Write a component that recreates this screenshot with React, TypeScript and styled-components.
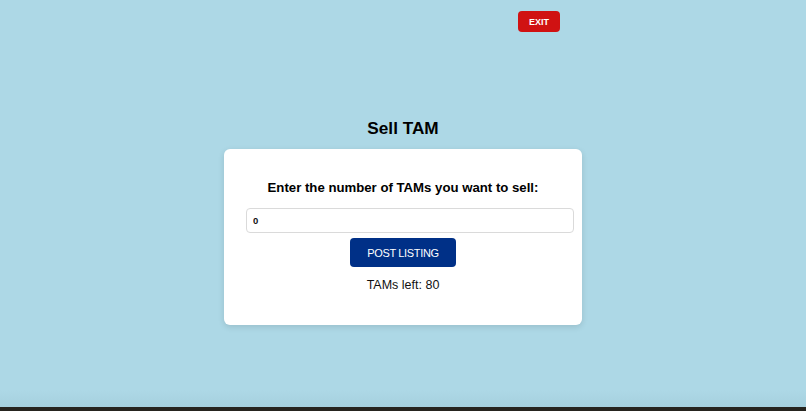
import styled, { createGlobalStyle } from "styled-components";

const GlobalStyle = createGlobalStyle`
  html, body {
    margin: 0;
    padding: 0;
    background: #add8e6;
    font-family: "Liberation Sans", Arial, sans-serif;
  }
`;

export default function App() {
  return (
    <Page>
      <GlobalStyle />
      <TopBar>
        <ExitButton type="button">EXIT</ExitButton>
      </TopBar>
      <Main>
        <Title>Sell TAM</Title>
        <Card>
          <Label htmlFor="tam-amount">Enter the number of TAMs you want to sell:</Label>
          <AmountInput id="tam-amount" type="number" defaultValue={0} />
          <PostButton type="button">POST LISTING</PostButton>
          <Remaining>TAMs left: 80</Remaining>
        </Card>
      </Main>
      <BottomEdge />
    </Page>
  );
}

const Page = styled.div`
  min-height: 100vh;
  display: flex;
  flex-direction: column;
  background: linear-gradient(to bottom, #add8e6 0%, #add8e6 95%, #a4cedc 100%);
`;

const TopBar = styled.div`
  display: flex;
  justify-content: flex-end;
  padding: 11px 246px 0 0;
`;

const ExitButton = styled.button`
  width: 42px;
  height: 21px;
  border: none;
  border-radius: 4px;
  background: #d01212;
  color: #fff;
  font-family: "Liberation Sans", Arial, sans-serif;
  font-size: 9px;
  font-weight: bold;
  padding: 0;
  cursor: pointer;
`;

const Main = styled.main`
  flex: 1;
  display: flex;
  flex-direction: column;
  align-items: center;
  padding-top: 86px;
`;

const Title = styled.h1`
  margin: 0 0 11px;
  font-size: 17.2px;
  line-height: 20px;
  font-weight: bold;
  color: #000;
`;

const Card = styled.div`
  width: 358px;
  box-sizing: border-box;
  padding: 31px 22px 32px;
  background: #fff;
  border-radius: 6px;
  box-shadow: 0 2px 6px rgba(0, 0, 0, 0.12);
  display: flex;
  flex-direction: column;
  align-items: center;
`;

const Label = styled.label`
  font-size: 13.2px;
  line-height: 16px;
  font-weight: bold;
  color: #000;
  margin-bottom: 12px;
  white-space: nowrap;
`;

/* the field runs past the card's right padding */
const AmountInput = styled.input`
  align-self: flex-start;
  width: calc(100% + 14px);
  height: 25px;
  box-sizing: border-box;
  border: 1px solid #dadada;
  border-radius: 4px;
  padding: 0 6px;
  font-family: "Liberation Sans", Arial, sans-serif;
  font-size: 9.5px;
  font-weight: bold;
  color: #111;
  margin-bottom: 5px;
  -moz-appearance: textfield;
  &::-webkit-inner-spin-button,
  &::-webkit-outer-spin-button {
    -webkit-appearance: none;
    margin: 0;
  }
`;

const PostButton = styled.button`
  width: 106px;
  height: 29px;
  border: none;
  border-radius: 4px;
  background: #003087;
  color: #fff;
  font-family: "Liberation Sans", Arial, sans-serif;
  font-size: 11px;
  letter-spacing: -0.35px;
  padding: 0;
  cursor: pointer;
  margin-bottom: 11px;
`;

const Remaining = styled.p`
  margin: 0;
  font-size: 12.5px;
  line-height: 15px;
  color: #111;
`;

const BottomEdge = styled.div`
  height: 4px;
  background: #26241f;
`;
